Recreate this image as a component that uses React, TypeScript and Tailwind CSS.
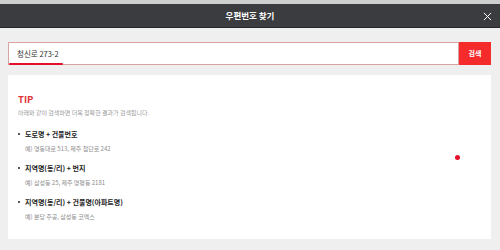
import React from 'react';

const tips = [
  { title: '도로명 + 건물번호', example: '예) 영동대로 513, 제주 첨단로 242' },
  { title: '지역명(동/리) + 번지', example: '예) 삼성동 25, 제주 영평동 2181' },
  { title: '지역명(동/리) + 건물명(아파트명)', example: '예) 분당 주공, 삼성동 코엑스' },
];

const App: React.FC = () => {
  return (
    <div className="relative w-[500px] h-[250px] overflow-hidden bg-[#efefef] font-['Noto_Sans_CJK_KR','Noto_Sans',sans-serif]">
      {/* Top strip */}
      <div className="h-[4px] bg-[#cfcfcf]"></div>

      {/* Header */}
      <div className="relative flex h-[24px] items-center justify-center bg-[#3b3c40] border-b border-[#26272a]">
        <span className="text-[8.5px] font-bold text-white leading-none">우편번호 찾기</span>
        <svg viewBox="0 0 10 10" className="absolute right-[8px] top-[8px] w-[9px] h-[9px]">
          <path d="M1 1L9 9M9 1L1 9" stroke="#ffffff" strokeWidth="1.1" fill="none" />
        </svg>
      </div>

      <div className="pl-[8px] pr-[9px]">
        {/* Search row */}
        <div className="mt-[14px] flex h-[23px]">
          <div className="relative flex flex-1 items-center border border-[#d9a3a3] bg-white pl-[8px]">
            <span className="text-[7.5px] text-[#333] leading-none">청신로 273-2</span>
            <div className="absolute left-[0px] bottom-[-1px] w-[54px] h-[2.5px] rounded-full bg-[#e4102a]"></div>
          </div>
          <button className="flex w-[32px] items-center justify-center bg-[#f52b2b] text-[7px] font-bold text-white">
            검색
          </button>
        </div>

        {/* Tip card */}
        <div className="mt-[10px] h-[164px] bg-white pl-[10px] pt-[18px]">
          <div className="text-[9.5px] font-bold leading-[12px] text-[#e0363a]">TIP</div>
          <div className="mt-[3px] text-[6px] leading-[10px] text-[#9a9a9a]">
            아래와 같이 검색하면 더욱 정확한 결과가 검색됩니다.
          </div>
          <div className="mt-[11px] flex flex-col gap-[9px]">
            {tips.map((t) => (
              <div key={t.title}>
                <div className="flex items-center leading-[10px]">
                  <span className="mr-[5px] inline-block w-[2px] h-[2px] rounded-full bg-[#222]"></span>
                  <span className="text-[7px] font-bold text-[#222]">{t.title}</span>
                </div>
                <div className="mt-[5px] pl-[7px] text-[6px] leading-[10px] text-[#8c8c8c]">{t.example}</div>
              </div>
            ))}
          </div>
        </div>
      </div>

      {/* Red marker dot */}
      <div className="absolute left-[455px] top-[155px] w-[5px] h-[5px] rounded-full bg-[#e4102a]"></div>
    </div>
  );
};

export default App;
